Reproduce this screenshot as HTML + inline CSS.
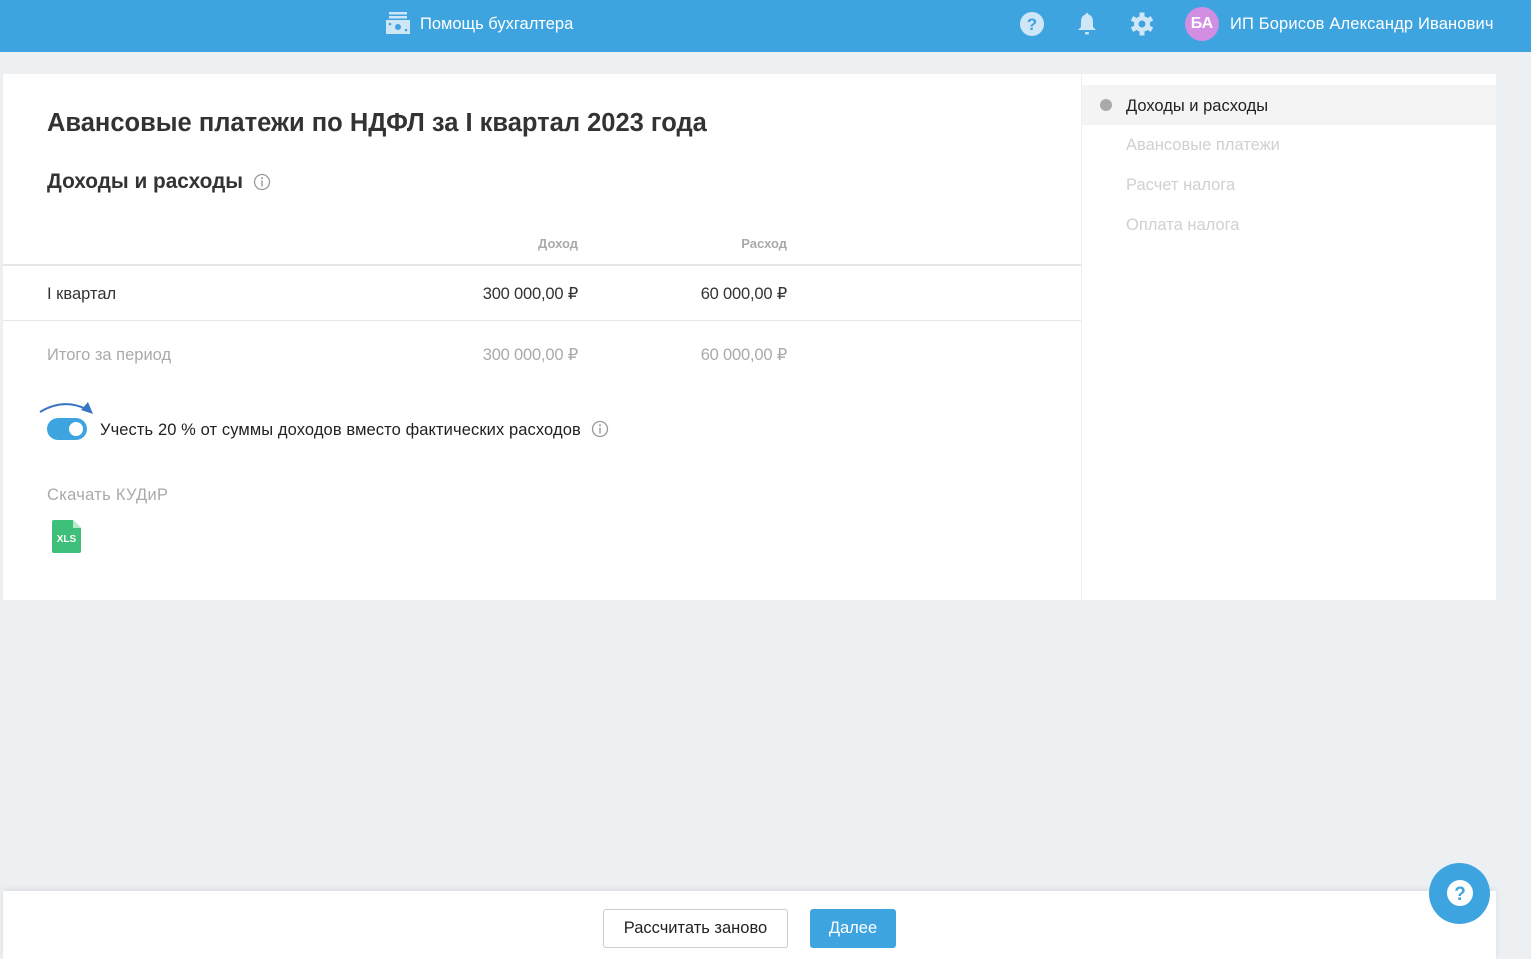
<!DOCTYPE html>
<html><head><meta charset="utf-8"><style>
*{margin:0;padding:0;box-sizing:border-box}
body{width:1531px;height:959px;background:#edf0f3;font-family:"Liberation Sans",sans-serif;position:relative;overflow:hidden;color:#222}
.a{position:absolute;white-space:nowrap}
.top{position:absolute;left:0;top:0;width:1531px;height:52px;background:#3ea4df}
.card{position:absolute;left:3px;top:74px;width:1078px;height:526px;background:#fff}
.side{position:absolute;left:1082px;top:74px;width:414px;height:526px;background:#fff}
.num{text-align:right;width:200px}
.t{font-size:16.5px}
</style></head><body>
<div class="top"></div>
<svg class="a" style="left:386px;top:12px" width="24" height="22" viewBox="0 0 24 22"><rect x="3" y="0" width="18" height="2.5" fill="#cfe6f6"/><rect x="3" y="4" width="18" height="2.5" fill="#cfe6f6"/><rect x="0" y="8" width="24" height="14" fill="#cfe6f6"/><circle cx="12" cy="15" r="3" fill="#3ea4df"/><circle cx="4" cy="12" r="1.3" fill="#3ea4df"/><circle cx="20" cy="18" r="1.3" fill="#3ea4df"/></svg>
<div class="a t" style="left:420px;top:15px;color:#fff;letter-spacing:0px">Помощь бухгалтера</div>
<svg class="a" style="left:1020px;top:12px" width="24" height="24" viewBox="0 0 24 24"><circle cx="12" cy="12" r="12" fill="#cfe6f6"/><text x="12" y="18" font-size="17" font-weight="bold" text-anchor="middle" fill="#3ea4df" font-family="Liberation Sans">?</text></svg>
<svg class="a" style="left:1077px;top:12px" width="20" height="24" viewBox="0 0 20 24"><path d="M10 1c1 0 1.5.7 1.5 1.5C15 3.5 16 6.5 16 10v5l3 3H1l3-3v-5c0-3.5 1-6.5 4.5-7.5C8.5 1.7 9 1 10 1z" fill="#cfe6f6"/><rect x="8" y="20" width="4" height="2.5" rx="1" fill="#cfe6f6"/></svg>
<svg class="a" style="left:1130px;top:12px" width="24" height="24" viewBox="0 0 24 24"><g fill="#cfe6f6"><circle cx="12" cy="12" r="8"/><g id="t"><rect x="9.5" y="0.5" width="5" height="5"/><rect x="9.5" y="18.5" width="5" height="5"/></g><use href="#t" transform="rotate(60 12 12)"/><use href="#t" transform="rotate(120 12 12)"/></g><circle cx="12" cy="12" r="3.5" fill="#3ea4df"/></svg>
<div class="a" style="left:1185px;top:7px;width:34px;height:34px;border-radius:50%;background:#d18ee2;color:#fff;font-size:16px;font-weight:bold;text-align:center;line-height:34px">БА</div>
<div class="a t" style="left:1230px;top:15px;color:#fff;letter-spacing:0.15px">ИП Борисов Александр Иванович</div>

<div class="card"></div>
<div class="side"></div>
<div class="a" style="left:47px;top:109px;font-size:25.5px;font-weight:bold;color:#333">Авансовые платежи по НДФЛ за I квартал 2023 года</div>
<div class="a" style="left:47px;top:170px;font-size:20.8px;font-weight:bold;color:#333">Доходы и расходы</div>
<svg class="a" style="left:253px;top:173px" width="18" height="18" viewBox="0 0 18 18"><circle cx="9" cy="9" r="7.5" fill="none" stroke="#999" stroke-width="1.3"/><rect x="8.3" y="7.5" width="1.4" height="6" fill="#999"/><circle cx="9" cy="5.3" r="1" fill="#999"/></svg>
<div class="a num" style="left:378px;top:236px;font-size:13px;font-weight:bold;color:#aaa">Доход</div>
<div class="a num" style="left:587px;top:236px;font-size:13px;font-weight:bold;color:#aaa">Расход</div>
<div class="a" style="left:3px;top:264px;width:1078px;height:2px;background:#e6e6e6"></div>
<div class="a t" style="left:47px;top:285px;color:#333">I квартал</div>
<div class="a num t" style="left:378px;top:284px;color:#333;letter-spacing:-0.2px">300 000,00 ₽</div>
<div class="a num t" style="left:587px;top:284px;color:#333;letter-spacing:-0.2px">60 000,00 ₽</div>
<div class="a" style="left:3px;top:320px;width:1078px;height:1px;background:#e6e6e6"></div>
<div class="a t" style="left:47px;top:346px;color:#aaa">Итого за период</div>
<div class="a num t" style="left:378px;top:345px;color:#aaa;letter-spacing:-0.2px">300 000,00 ₽</div>
<div class="a num t" style="left:587px;top:345px;color:#aaa;letter-spacing:-0.2px">60 000,00 ₽</div>
<svg class="a" style="left:38px;top:400px" width="58" height="18" viewBox="0 0 58 18"><path d="M2 12 Q25 -2 48 9" fill="none" stroke="#3a75c4" stroke-width="2"/><path d="M55 14 L50 2 L43 10 Z" fill="#3a75c4"/></svg>
<div class="a" style="left:47px;top:418px;width:40px;height:22px;border-radius:11px;background:#3ea4df"></div>
<div class="a" style="left:69px;top:422px;width:14px;height:14px;border-radius:50%;background:#fff"></div>
<div class="a" style="left:100px;top:421px;font-size:16.5px;color:#222;letter-spacing:0.1px">Учесть 20 % от суммы доходов вместо фактических расходов</div>
<svg class="a" style="left:591px;top:420px" width="18" height="18" viewBox="0 0 18 18"><circle cx="9" cy="9" r="7.5" fill="none" stroke="#999" stroke-width="1.3"/><rect x="8.3" y="7.5" width="1.4" height="6" fill="#999"/><circle cx="9" cy="5.3" r="1" fill="#999"/></svg>
<div class="a t" style="left:47px;top:486px;color:#aaa;letter-spacing:0.3px">Скачать КУДиР</div>
<svg class="a" style="left:52px;top:520px" width="30" height="33" viewBox="0 0 30 33"><path d="M2 0H21L29 8V31a2 2 0 0 1-2 2H2a2 2 0 0 1-2-2V2a2 2 0 0 1 2-2z" fill="#3fc07a"/><path d="M21 0V8H29Z" fill="#b6e8cb"/><text x="14.5" y="22" font-size="10" font-weight="bold" fill="#fff" text-anchor="middle" font-family="Liberation Sans">XLS</text></svg>

<div class="a" style="left:1082px;top:85px;width:414px;height:40px;background:#f4f4f4"></div>
<div class="a" style="left:1100px;top:99px;width:12px;height:12px;border-radius:50%;background:#aaa"></div>
<div class="a t" style="left:1126px;top:97px;color:#222">Доходы и расходы</div>
<div class="a t" style="left:1126px;top:136px;color:#d0d0d0">Авансовые платежи</div>
<div class="a t" style="left:1126px;top:176px;color:#d0d0d0">Расчет налога</div>
<div class="a t" style="left:1126px;top:216px;color:#d0d0d0">Оплата налога</div>

<div class="a" style="left:3px;top:891px;width:1493px;height:68px;background:#fff;box-shadow:0 -2px 6px rgba(0,0,0,0.08)"></div>
<div class="a t" style="left:603px;top:909px;width:185px;height:39px;border:1px solid #ccc;border-radius:3px;color:#222;text-align:center;line-height:37px">Рассчитать заново</div>
<div class="a t" style="left:810px;top:909px;width:86px;height:39px;background:#3ea4df;border-radius:3px;color:#fff;text-align:center;line-height:39px">Далее</div>
<div class="a" style="left:1429px;top:863px;width:61px;height:61px;border-radius:50%;background:#3ea4df"></div>
<svg class="a" style="left:1446px;top:879px" width="28" height="28" viewBox="0 0 28 28"><circle cx="14" cy="14" r="13" fill="#fff"/><text x="14" y="21" font-size="19" font-weight="bold" text-anchor="middle" fill="#3ea4df" font-family="Liberation Sans">?</text></svg>
</body></html>
